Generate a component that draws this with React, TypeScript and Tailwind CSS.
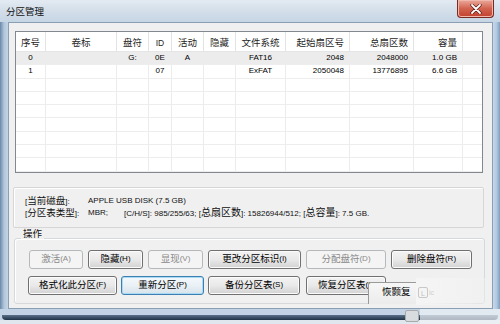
import type { ReactNode } from 'react'

const font = "font-['Liberation_Sans','Noto_Sans_CJK_SC',sans-serif]"

function Zh({ children, className = 'text-[9.5px]' }: { children: ReactNode; className?: string }) {
  return <span className={className}>{children}</span>
}

type Align = 'c' | 'r'

const columns: { label: ReactNode; align: Align }[] = [
  { label: <Zh>序号</Zh>, align: 'c' },
  { label: <Zh>卷标</Zh>, align: 'c' },
  { label: <Zh>盘符</Zh>, align: 'c' },
  { label: <span className="text-[8.5px]">ID</span>, align: 'c' },
  { label: <Zh>活动</Zh>, align: 'c' },
  { label: <Zh>隐藏</Zh>, align: 'c' },
  { label: <Zh>文件系统</Zh>, align: 'c' },
  { label: <Zh>起始扇区号</Zh>, align: 'r' },
  { label: <Zh>总扇区数</Zh>, align: 'r' },
  { label: <Zh>容量</Zh>, align: 'r' },
]

const rows: string[][] = [
  ['0', '', 'G:', '0E', 'A', '', 'FAT16', '2048', '2048000', '1.0 GB'],
  ['1', '', '', '07', '', '', 'ExFAT', '2050048', '13776895', '6.6 GB'],
  [], [], [], [], [], [], [],
]

const grid =
  'grid grid-cols-[30px_71px_32px_23px_32px_32px_50px_64px_64px_49px_1fr]'

function cellAlign(a: Align) {
  return a === 'c' ? 'justify-center' : 'justify-end pr-[5px]'
}

function Button({
  children,
  w,
  disabled,
  primary,
  className = '',
}: {
  children: ReactNode
  w: string
  disabled?: boolean
  primary?: boolean
  className?: string
}) {
  const look = disabled
    ? 'border-[#b5b9bc] bg-[#f4f4f4] text-[#8a8a8a]'
    : primary
      ? 'border-[#3c7fb1] bg-linear-to-b from-[#f4f9fc] via-[#eaf1f6] to-[#d6e2ea] text-black shadow-[inset_0_0_0_1px_#a8daf5]'
      : 'border-[#707070] bg-linear-to-b from-[#f3f3f3] via-[#e9e9e9] to-[#d2d2d2] text-black shadow-[inset_0_0_0_1px_#fbfbfb]'
  return (
    <div
      className={`${w} h-[19px] rounded-[3px] border flex items-center justify-center leading-none ${look} ${className}`}
    >
      {children}
    </div>
  )
}

export default function App() {
  return (
    <div
      className={`${font} relative w-[500px] h-[324px] overflow-hidden flex flex-col bg-[#c3d3e4] text-[8px] text-black`}
    >
      {/* title bar */}
      <div className="h-[22px] shrink-0 flex items-center pl-[6px] pt-[1px] bg-linear-to-b from-[#e3eaf2] via-[#d3dee9] to-[#c6d5e5]">
        <Zh className="text-[9.5px] text-[#111] leading-none">分区管理</Zh>
      </div>
      <div className="absolute left-[457px] top-0 w-[37px] h-[18px] rounded-b-[4px] border border-t-0 border-[#7b2a22] bg-linear-to-b from-[#e9a99c] via-[#d26350] to-[#c2402c] flex items-center justify-center shadow-[inset_0_0_0_1px_#f0b8ac]">
        <svg width="12" height="10" viewBox="0 0 12 10">
          <path d="M2 1 L10 9 M10 1 L2 9" stroke="#5a1a14" strokeWidth="3.2" strokeLinecap="round" />
          <path d="M2 1 L10 9 M10 1 L2 9" stroke="#ffffff" strokeWidth="1.8" strokeLinecap="round" />
        </svg>
      </div>

      <div className="flex h-[287px] shrink-0">
        {/* left frame */}
        <div className="w-[8px] bg-linear-to-r from-[#6a88a8] via-[#b1c6db] to-[#c4d4e5]" />

        {/* client */}
        <div className="w-[485px] border border-[#8b9fb4] bg-[#f0f0f0] flex flex-col">
          {/* list view */}
          <div className="ml-[6px] mt-[8px] w-[468px] border border-[#828790] bg-white">
            <div className={`${grid} h-[20px] border-b border-[#e5e5e5] text-[#1e1e1e]`}>
              {columns.map((c, i) => (
                <div
                  key={i}
                  className={`flex items-center pt-[3px] border-r border-[#e3e3e3] leading-none ${cellAlign(c.align)}`}
                >
                  {c.label}
                </div>
              ))}
              <div />
            </div>
            {rows.map((r, ri) => (
              <div
                key={ri}
                className={`${grid} h-[13.3px] border-b border-[#ededed] ${ri === 0 ? 'bg-[#ececec]' : ''}`}
              >
                {columns.map((c, ci) => (
                  <div
                    key={ci}
                    className={`flex items-center border-r border-[#ececec] leading-none ${cellAlign(c.align)}`}
                  >
                    {r[ci] ?? ''}
                  </div>
                ))}
                <div />
              </div>
            ))}
          </div>

          {/* disk info */}
          <div className="ml-[4px] mt-[14px] w-[471px] h-[41px] border border-[#d6d6d6] rounded-[2px] shadow-[inset_1px_1px_0_#ffffff] pl-[11px] pt-[7px] text-[#111]">
            <div className="h-[12px] flex items-center leading-none">
              <span className="w-[63px]">
                [<Zh>当前磁盘</Zh>]:
              </span>
              <span>APPLE USB DISK (7.5 GB)</span>
            </div>
            <div className="h-[12px] flex items-center leading-none whitespace-pre">
              <span className="w-[63px]">
                [<Zh>分区表类型</Zh>]:
              </span>
              <span className="w-[36px]">MBR;</span>
              <span>
                [C/H/S]: 985/255/63; [<Zh className="text-[10px]">总扇区数</Zh>]: 15826944/512; [
                <Zh className="text-[10px]">总容量</Zh>]: 7.5 GB.
              </span>
            </div>
          </div>

          {/* group box */}
          <div className="relative ml-[5px] mt-[10px] w-[471px] h-[66px] border border-[#d5d9dc] rounded-[3px] shadow-[inset_1px_1px_0_#ffffff]">
            <div className="absolute left-[6px] top-[-10px] px-[2px] bg-[#f0f0f0] leading-none text-[#111]">
              <Zh>操作</Zh>
            </div>
            <div className="flex gap-[5px] pl-[14px] pt-[11px]">
              <Button w="w-[54px]" disabled>
                <Zh>激活</Zh>(A)
              </Button>
              <Button w="w-[55px]">
                <Zh>隐藏</Zh>(H)
              </Button>
              <Button w="w-[55px]" disabled>
                <Zh>显现</Zh>(V)
              </Button>
              <Button w="w-[93px]">
                <Zh>更改分区标识</Zh>(I)
              </Button>
              <Button w="w-[80px]" disabled>
                <Zh>分配盘符</Zh>(D)
              </Button>
              <Button w="w-[81px]">
                <Zh>删除盘符</Zh>(R)
              </Button>
            </div>
            <div className="flex pl-[13px] pt-[7px]">
              <Button w="w-[89px]">
                <Zh>格式化此分区</Zh>(F)
              </Button>
              <Button w="w-[83px]" primary className="ml-[4px]">
                <Zh>重新分区</Zh>(P)
              </Button>
              <Button w="w-[92px]" className="ml-[4px]">
                <Zh>备份分区表</Zh>(S)
              </Button>
              <Button w="w-[80px]" className="ml-[6px] justify-start pl-[11px]">
                <Zh>恢复分区表</Zh>(U)
              </Button>
            </div>
          </div>
        </div>

        {/* right frame */}
        <div className="w-[7px] bg-linear-to-r from-[#c7d8ea] via-[#b3c9df] to-[#7f9fbf]" />
      </div>

      {/* bottom frame */}
      <div className="h-[6px] shrink-0 bg-[#c2d3e5]" />
      <div className="h-[5px] shrink-0 mx-[2px] rounded-b-[4px] bg-linear-to-b from-[#5b728a] to-[#1f3347]" />
      <div className="flex-1 bg-[#dfe6ee]" />

      {/* pasted-over button and watermark */}
      <div className="absolute left-[368px] top-[282px] w-[48px] h-[22px] border-l border-t border-[#9a9a9a] rounded-tl-[3px] bg-linear-to-b from-[#f6f6f6] to-[#ececec] pl-[13px] pt-[4px] leading-none">
        <Zh>恢颢复</Zh>
      </div>
      <div className="absolute left-[416px] top-[278px] w-[76px] h-[27px] bg-linear-to-r from-[#f5f5f5] to-[#f0f0f0]/40" />
      <div className="absolute left-[418px] top-[287px] w-[10px] h-[11px] border border-[#c8c8c8] rounded-[2px] text-[7px] text-[#c0c0c0] leading-none pl-[2px] pt-[2px]">
        L
      </div>
      <span className="absolute left-[429px] top-[289px] text-[7px] leading-none text-[#cfcfcf]">ic</span>
      <div className="absolute left-[405px] top-[310px] w-[14px] h-[12px] rounded-[2px] border border-[#a9a9a9] bg-[#d9dcdf]" />
      <div className="absolute left-[420px] top-[309px] w-[80px] h-[15px] bg-[#eef2f6]/70" />
    </div>
  )
}
